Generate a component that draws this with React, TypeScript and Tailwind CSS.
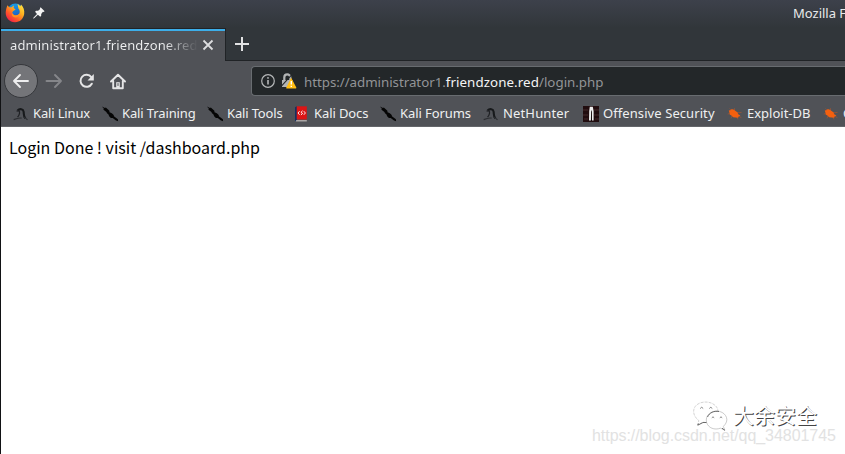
import type { ReactNode } from 'react';

function Firefox() {
  return (
    <svg width="20" height="20" viewBox="0 0 20 20">
      <defs>
        <linearGradient id="flame" x1="1" y1="0" x2="0.2" y2="1">
          <stop offset="0" stopColor="#fff04a" />
          <stop offset="0.4" stopColor="#ffb01f" />
          <stop offset="0.7" stopColor="#ff5a28" />
          <stop offset="1" stopColor="#f0184c" />
        </linearGradient>
        <linearGradient id="globe" x1="0" y1="0" x2="0.3" y2="1">
          <stop offset="0" stopColor="#12a5ee" />
          <stop offset="1" stopColor="#2454b8" />
        </linearGradient>
      </defs>
      <circle cx="10.5" cy="8.8" r="8.2" fill="url(#globe)" />
      <path d="M2.5 2.2 4.2 4.3 6.4 4.2 9 2.4 8.6 5 10.6 6.6 8 8.3 7.2 10C8.5 12.6 12 13.3 14.2 10.7 15.2 9 14.8 7 13.4 5.4L12.5 1 15.5 3.3 16 1.5C18.5 4 19.7 7.4 19.2 11 18.4 16 14.5 19.4 9.8 19.2 4.5 19 .8 15 .7 10 .7 7 1.5 4.5 2.5 2.2Z" fill="url(#flame)" />
      <path d="M7.2 10C8.2 12.8 12 13.3 14.2 10.7 13.8 13.8 11 15.2 8.6 14 6.8 13 6.4 11.4 7.2 10Z" fill="#ff9022" />
    </svg>
  );
}

function Pin() {
  return (
    <svg width="12" height="12" viewBox="0 0 12 12" fill="#f4f4f4">
      <path d="M7.6.3 11.6 4.2 10.6 4.9 9.9 4.7 8.2 6.9 8.2 8.8 7.3 9.7 4.9 7.7 .9 11.5 .2 11.6 .4 10.8 4 6.9 2.1 4.8 3 3.8 5.1 3.8 7.2 2 6.9 1.2Z" />
    </svg>
  );
}

function Dragon() {
  return (
    <svg width="16" height="16" viewBox="0 0 16 16" fill="none">
      <path d="M4.6 4.4C6.8 2.2 10.2 3 10.6 5.6 11 8 10.3 9.8 12.4 12.4" stroke="#17191b" strokeWidth="2.1" />
      <path d="M3.6 5.2 6 4.6C7.2 6.4 6.4 8.8 4.6 11.2" stroke="#1f2124" strokeWidth="1.2" />
      <path d="M.7 13.6C3 12.6 5.5 11.6 8.6 12.1M10.4 11C12 11.5 13.4 12.5 14.5 13.9" stroke="#2c2e32" strokeWidth="1.2" />
    </svg>
  );
}

function Blade() {
  return (
    <svg width="18" height="16" viewBox="0 0 18 16" fill="#050505">
      <path d="M0 .4 3 2 3.8 1.5 7.4 4.8 7.5 6.2 9.8 7.2 11.7 9.1 11.9 10.3 15.9 13.2 16.1 15.2 14 14.6 10.7 12 8.9 12 7.1 10.3 6.5 8.6 5 7.3 4.4 6 1.2 3.6 2 3.1Z" />
    </svg>
  );
}

function Book() {
  return (
    <svg width="14" height="16" viewBox="0 0 14 16">
      <path d="M1 1.2 3 .3 3 14.5 1 15.5Z" fill="#163062" />
      <path d="M2.7.3H12.8V13.5H2.7Z" fill="#dc1515" />
      <path d="M2.3 14H12.8V15.6H1.6Z" fill="#aaa6a5" />
      <path d="M5.6 5.2 4 7 5.6 8.8M9.8 5.2 11.4 7 9.8 8.8M8.6 4.8 6.9 6.4 8.6 7.4 6.9 9" fill="none" stroke="#fff" strokeWidth=".9" />
    </svg>
  );
}

function Offensive() {
  return (
    <svg width="16" height="16" viewBox="0 0 16 16">
      <path d="M0 0H16V16H0Z" fill="#210d0f" />
      <path d="M0 4H5M0 9H5M11 4H16M11 9H16M1 13H5M12 13H16" stroke="#452a2d" />
      <path d="M6.8 .8H9.8L10.6 5 10.6 14.5H9L8.7 5.5H8.1L7.9 14.5H6L6.2 5Z" fill="#eee" />
      <path d="M8.1 4.5 8.7 4.5 8.8 15H8Z" fill="#100809" />
    </svg>
  );
}

function Exploit() {
  return (
    <svg width="16" height="14" viewBox="0 0 16 14">
      <path d="M4 3 2.6 1.6M7.5 3V1.2M5 9 4 11.4M10 10.2 11 12.4M12 9.4 14.4 10.6M10.6 5.8 14.6 5.4M2.5 6.5 .7 7.1" stroke="#9b5436" strokeWidth=".8" />
      <path d="M1.8 3.4 4 3 4.6 2.1 7 2.8 9.6 4.8 10.4 5 11.2 7.3 13.4 8.6 11.6 9.6 11.2 10.8 8.6 10.6 6.2 10.2 4.4 8.5 2.6 7.6 2.6 6.2Z" fill="#f4600f" />
    </svg>
  );
}

function Bookmark({ icon, label, className }: { icon: ReactNode; label: string; className: string }) {
  return (
    <div className={`flex h-[20px] shrink-0 items-center whitespace-nowrap ${className}`}>
      <span className="flex w-[20px] shrink-0">{icon}</span>
      {label}
    </div>
  );
}

function Toolbar() {
  return (
    <div className="flex h-[41px] items-start bg-[#505257]">
      <div className="ml-[3px] mt-[3px] flex size-[34px] items-center justify-center rounded-full border border-[#35373b] bg-[#747579]">
        <svg width="18" height="16" viewBox="0 0 18 16" fill="none" stroke="#eeeeef" strokeWidth="1.9" strokeLinecap="round" strokeLinejoin="round"><path d="M16 8H2M8 2 2 8 8 14" /></svg>
      </div>
      <svg className="ml-[7px] mt-[12px]" width="18" height="16" viewBox="0 0 18 16" fill="none" stroke="#85868a" strokeWidth="1.9" strokeLinecap="round" strokeLinejoin="round"><path d="M1.5 8H16M10 2 16 8 10 14" /></svg>
      <svg className="ml-[15px] mt-[12px]" width="18" height="16" viewBox="0 0 18 16" fill="none" stroke="#e5e5e6" strokeWidth="2"><path d="M13.8 10.7A6 6 0 1 1 13.3 4.2" strokeLinecap="round" /><path d="M15.8 1V7.4H9.5Z" fill="#e5e5e6" stroke="none" /></svg>
      <svg className="ml-[14px] mt-[12px]" width="16" height="17" viewBox="0 0 16 17" fill="none" stroke="#e5e5e6" strokeWidth="1.9" strokeLinejoin="round" strokeLinecap="round"><path d="M1 8.5 8 1.7 15 8.5M3.2 8V15.3H12.8V8" /><path d="M6.2 9.2H9.8V15H6.2Z" fill="#e5e5e6" stroke="none" /><path d="M8 10.5V12.5" stroke="#505257" strokeWidth="1" /></svg>
      <div className="ml-[125px] mt-[5px] flex h-[30px] flex-1 items-center rounded-l-[4px] border border-r-0 border-[#686c70] bg-[#232729] text-[13.33px] text-[#929497]">
        <svg className="ml-[9px] shrink-0" width="14" height="14" viewBox="0 0 14 14" fill="none" stroke="#b6b8b9"><circle cx="7" cy="7" r="6.3" strokeWidth="1.2" /><path d="M7 6V10.5" strokeWidth="1.6" /><circle cx="7" cy="3.9" r=".9" fill="#b6b8b9" stroke="none" /></svg>
        <svg className="ml-[6px] shrink-0" width="16" height="16" viewBox="0 0 16 16">
          <path d="M3.3 7.5V4.4A3 3 0 0 1 9.3 4.4V7.5" fill="none" stroke="#b2b4b5" strokeWidth="2.2" />
          <path d="M1 7H11.5V14H1Z" fill="#b2b4b5" />
          <path d="M.6 12.8 10.2 2.4" stroke="#232729" strokeWidth="1.1" />
          <path d="M10.2 4.8 15.3 14.5C15.5 15.1 15.1 15.5 14.5 15.5H6C5.3 15.5 5 15 5.3 14.5Z" fill="#ffbd12" />
          <path d="M10.3 8V11.5M10.3 12.7V14" stroke="#fff" strokeWidth="1.4" />
        </svg>
        <span className="ml-[7px] mt-[3px] whitespace-nowrap"><span className="tracking-[-0.04px]">https://administrator1.</span><span className="tracking-[0.08px] text-[#f4f4f4]">friendzone.red</span>/login.php</span>
      </div>
    </div>
  );
}

function WeChat() {
  return (
    <svg width="36" height="32" viewBox="0 0 36 32" fill="none">
      <path d="M13 21.5 10 21.2 4.8 24 5.8 19.6C-1.5 14-.8 5.2 6.5 2.2 14.8-1.2 24.5 3 25 10" stroke="#c2c2c2" strokeWidth=".7" strokeDasharray="3 1" />
      <path d="M13.6 21.5C11.8 14.6 17.8 9.9 24 10.1 31.6 10.3 36.5 17.4 32.3 23.2L30.4 25.4 31.9 29.3 27.5 27.2C21.5 29.4 15.3 27 13.6 21.5Z" fill="#fff" stroke="#aaa" strokeWidth=".6" />
      <path d="M5.3 22.5 4.8 24.2 10 21.5H13.5M14.5 16C16.5 11.7 20.8 9.6 26 10.5M29 27.2 31.9 29.3" stroke="#4c4c4c" strokeWidth=".8" />
      <path d="M7.2 7.5Q8.7 5 10.2 7.5M16.3 7.5Q17.8 5 19.3 7.5M18.8 16.8Q20 14.8 21.2 16.8M26.8 16.8Q28 14.8 29.2 16.8" stroke="#777" strokeWidth=".9" />
    </svg>
  );
}

export default function App() {
  return (
    <div className="flex h-[454px] w-[845px] overflow-hidden bg-white font-['Noto_Sans',sans-serif]">
      <div className="w-px shrink-0 bg-[#111214]" />
      <main className="flex min-w-0 flex-1 flex-col">
        <div className="flex h-[28px] bg-linear-to-b from-[#3d414b] to-[#31363a]">
          <div className="ml-[4px] mt-[3px]"><Firefox /></div>
          <div className="ml-[8px] mt-[7px]"><Pin /></div>
          <div className="ml-[748px] mt-[4px] whitespace-nowrap text-[13px] leading-[18px] text-[#e8e9ea]">Mozilla Firefox</div>
        </div>
        <div className="flex h-[33px] bg-[#31363a]">
          <div className="relative flex w-[225px] items-center border-r border-t border-[#202326] bg-[#505257]">
            <div className="absolute inset-x-0 top-0 h-[2px] bg-[#3daee9]" />
            <div className="ml-[9px] w-[188px] overflow-hidden whitespace-nowrap bg-linear-to-r from-[#eff0f1] from-82% to-[#505257] bg-clip-text text-[13px] leading-[20px] tracking-[0.12px] text-transparent">administrator1.friendzone.red/login.php</div>
            <svg className="ml-[4px]" width="12" height="12" viewBox="0 0 12 12" stroke="#dddddf" strokeWidth="1.8"><path d="M1.5 1.5 10.5 10.5M10.5 1.5 1.5 10.5" /></svg>
          </div>
          <div className="flex flex-1 border-b border-[#202326]">
            <svg className="ml-[8px] mt-[8px]" width="16" height="16" viewBox="0 0 16 16" stroke="#e1e2e3" strokeWidth="2"><path d="M8 1V15M1 8H15" /></svg>
          </div>
        </div>
        <Toolbar />
        <div className="flex h-[25px] items-center overflow-hidden border-b border-[#64666a] bg-[#505257] pl-[12px] text-[13px] text-[#eff0f1]">
          <Bookmark className="w-[89px] tracking-[-0.15px]" icon={<Dragon />} label="Kali Linux" />
          <Bookmark className="w-[105px] tracking-[-0.12px]" icon={<Blade />} label="Kali Training" />
          <Bookmark className="w-[87px] tracking-[-0.15px]" icon={<Blade />} label="Kali Tools" />
          <Bookmark className="w-[86px] tracking-[-0.1px]" icon={<Book />} label="Kali Docs" />
          <Bookmark className="w-[103px] tracking-[-0.08px]" icon={<Blade />} label="Kali Forums" />
          <Bookmark className="w-[100px] tracking-[0.15px]" icon={<Dragon />} label="NetHunter" />
          <Bookmark className="w-[144px] tracking-[0.08px]" icon={<Offensive />} label="Offensive Security" />
          <Bookmark className="w-[96px]" icon={<Exploit />} label="Exploit-DB" />
          <Bookmark className="w-[70px]" icon={<Exploit />} label="GHDB" />
        </div>
        <div className="relative flex-1 bg-white">
          <p className="pl-[8px] pt-[7px] font-['Noto_Sans_CJK_SC',sans-serif] text-[16px] leading-[26px] text-black">Login Done ! visit /dashboard.php</p>
          <div className="absolute left-[692px] top-[274px] flex items-start">
            <WeChat />
            <span className="ml-[4px] mt-[-1px] whitespace-nowrap font-['Noto_Sans_CJK_SC',sans-serif] text-[21px] leading-[28px] text-white [text-shadow:1px_1px_0_#444]">大余安全</span>
          </div>
          <div className="absolute left-[591px] top-[299px] whitespace-nowrap font-['Liberation_Sans',sans-serif] text-[16px] leading-[20px] tracking-[-0.05px] text-[#e2e2e2]">https://blog.csdn.net/qq_34801745</div>
        </div>
      </main>
    </div>
  );
}
